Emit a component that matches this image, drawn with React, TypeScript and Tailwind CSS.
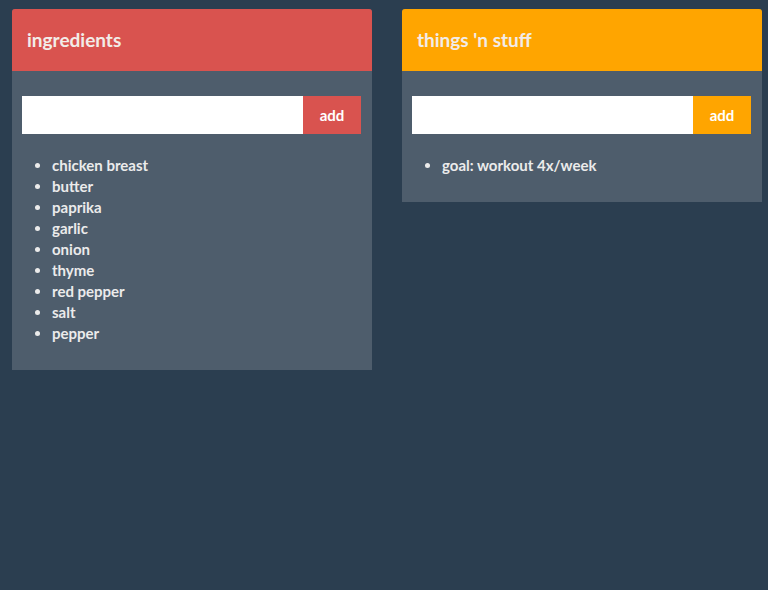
import { useState } from "react";

type Panel = {
  title: string;
  color: string;
  items: string[];
};

const panels: Panel[] = [
  {
    title: "ingredients",
    color: "bg-[#d9534f]",
    items: ["chicken breast", "butter", "paprika", "garlic", "onion", "thyme", "red pepper", "salt", "pepper"],
  },
  {
    title: "things 'n stuff",
    color: "bg-[#ffa500]",
    items: ["goal: workout 4x/week"],
  },
];

const ListPanel = ({ panel }: { panel: Panel }) => {
  const [items, setItems] = useState(panel.items);
  const [text, setText] = useState("");

  const add = () => {
    if (!text.trim()) return;
    setItems([...items, text.trim()]);
    setText("");
  };

  return (
    <div className="w-[360px] shrink-0 rounded-t-[3px] overflow-hidden bg-[#4e5d6c]">
      <div className={`${panel.color} h-[62px] px-[15px] flex items-center`}>
        <h3 className="text-[19px] font-bold text-[#f2ece8]">{panel.title}</h3>
      </div>
      <div className="pl-[10px] pr-[11px] pt-[25px] pb-[26px]">
        <div className="flex h-[38px]">
          <input
            value={text}
            onChange={(e) => setText(e.target.value)}
            className="flex-1 min-w-0 bg-white px-3 text-[15px] text-[#333] outline-none"
          />
          <button onClick={add} className={`${panel.color} w-[58px] text-[15px] font-bold text-white`}>
            add
          </button>
        </div>
        <ul className="mt-[21px] pl-[30px] list-disc text-[15px] leading-[21px] font-bold text-[#ebebeb]">
          {items.map((item, i) => (
            <li key={i}>{item}</li>
          ))}
        </ul>
      </div>
    </div>
  );
};

const App = () => {
  return (
    <div className="min-h-screen bg-[#2b3e50] font-['Lato','Liberation_Sans',sans-serif]">
      <div className="flex items-start gap-[30px] pl-[12px] pt-[9px]">
        {panels.map((p) => (
          <ListPanel key={p.title} panel={p} />
        ))}
      </div>
    </div>
  );
};

export default App;
